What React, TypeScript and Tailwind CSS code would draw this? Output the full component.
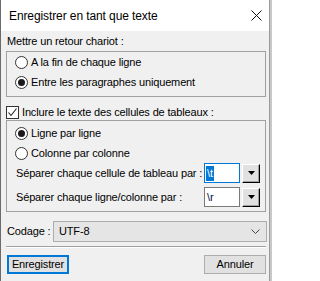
import React from 'react';

const font = { fontFamily: '"Liberation Sans", Arial, sans-serif' };

function Radio({ checked, label }: { checked?: boolean; label: string }) {
  return (
    <div className="flex h-[20px] items-center">
      <span className="flex h-[13px] w-[13px] shrink-0 items-center justify-center rounded-full border border-[#333333] bg-white">
        {checked && <span className="h-[7px] w-[7px] rounded-full bg-[#1a1a1a]" />}
      </span>
      <span className="ml-[3px] whitespace-nowrap">{label}</span>
    </div>
  );
}

function DropButton() {
  return (
    <div className="ml-[2px] flex h-[19px] w-[18px] shrink-0 items-center justify-center border border-black border-t-white border-l-white bg-[#e1e1e1] shadow-[inset_-1px_-1px_0_#a0a0a0]">
      <svg width="7" height="4" viewBox="0 0 7 4">
        <path d="M0 0h7L3.5 4z" fill="#000" />
      </svg>
    </div>
  );
}

function SepRow({ label, value, focused }: { label: string; value: string; focused?: boolean }) {
  return (
    <div className="flex h-[20px] items-center pr-[5px]">
      <span className="ml-[1px] min-w-0 flex-1 overflow-hidden whitespace-nowrap">{label}</span>
      <div
        className={`flex h-[20px] w-[36px] shrink-0 items-center border bg-white ${
          focused ? 'border-[#0078d7] pl-[1px]' : 'border-[#7a7a7a] pl-[2px]'
        }`}
      >
        {focused ? (
          <span className="bg-[#0078d7] px-[1px] leading-[15px] text-white">{value}</span>
        ) : (
          <span className="leading-[15px] text-[#0a0a40]">{value}</span>
        )}
      </div>
      <DropButton />
    </div>
  );
}

export default function App() {
  return (
    <div className="flex h-[281px] w-[272px] overflow-hidden bg-[#c8c8c8]" style={font}>
      <div className="flex h-[281px] w-[270px] shrink-0 flex-col border-l border-r border-l-[#6b6b6b] border-r-[#9a9a9a] bg-[#f0f0f0]">
        <div className="flex h-[31px] shrink-0 items-center justify-between bg-white pl-[8px] pr-[7px]">
          <span className="whitespace-nowrap text-[12px] tracking-[-0.1px] text-black">Enregistrer en tant que texte</span>
          <svg width="11" height="11" viewBox="0 0 11 11" className="mt-[-1px]">
            <path d="M0.5 0.5L10.5 10.5M10.5 0.5L0.5 10.5" stroke="#111" strokeWidth="1" />
          </svg>
        </div>

        <div className="flex flex-col pl-[5px] pr-[2px] text-[11px] tracking-[-0.15px] text-black">
          <div className="flex h-[20px] items-center whitespace-nowrap pl-[1px]">Mettre un retour chariot :</div>

          <div className="flex h-[46px] w-[260px] flex-col border border-[#a0a0a0] pl-[8px] pb-[4px]">
            <Radio label="A la fin de chaque ligne" />
            <Radio checked label="Entre les paragraphes uniquement" />
          </div>

          <div className="flex h-[23px] items-end pb-[1px]">
            <span className="flex h-[13px] w-[13px] shrink-0 items-center justify-center border border-[#333333] bg-white">
              <svg width="11" height="11" viewBox="0 0 11 11">
                <path d="M1.5 5.5L4 8.5L9.5 1.5" stroke="#222" strokeWidth="1.1" fill="none" />
              </svg>
            </span>
            <span className="ml-[3px] whitespace-nowrap leading-[13px]">Inclure le texte des cellules de tableaux :</span>
          </div>

          <div className="flex h-[92px] w-[260px] flex-col border border-[#a0a0a0] pl-[8px] pt-[2px]">
            <Radio checked label="Ligne par ligne" />
            <Radio label="Colonne par colonne" />
            <SepRow label="Séparer chaque cellule de tableau par :" value="\t" focused />
            <div className="h-[4px]" />
            <SepRow label="Séparer chaque ligne/colonne par :" value="\r" />
          </div>

          <div className="mt-[9px] flex h-[21px] items-center">
            <span className="w-[47px] shrink-0 whitespace-nowrap pl-[1px]">Codage :</span>
            <div className="flex h-[21px] min-w-0 flex-1 items-center justify-between border border-[#adadad] bg-[#e5e5e5] pl-[5px] pr-[6px]">
              <span>UTF-8</span>
              <svg width="9" height="5" viewBox="0 0 9 5">
                <path d="M0.5 0.5L4.5 4.5L8.5 0.5" stroke="#444" strokeWidth="1" fill="none" />
              </svg>
            </div>
          </div>

          <div className="mt-[4px] h-[2px] w-[260px] border-t border-[#a0a0a0] bg-white" />

          <div className="mt-[7px] flex items-center justify-between pl-[1px] pr-[1px]">
            <button className="flex h-[19px] w-[62px] items-center justify-center border-2 border-[#0078d7] bg-[#e1e1e1] text-black">
              Enregistrer
            </button>
            <button className="flex h-[19px] w-[62px] items-center justify-center border border-[#adadad] bg-[#e1e1e1] text-black">
              Annuler
            </button>
          </div>
        </div>
      </div>
    </div>
  );
}
